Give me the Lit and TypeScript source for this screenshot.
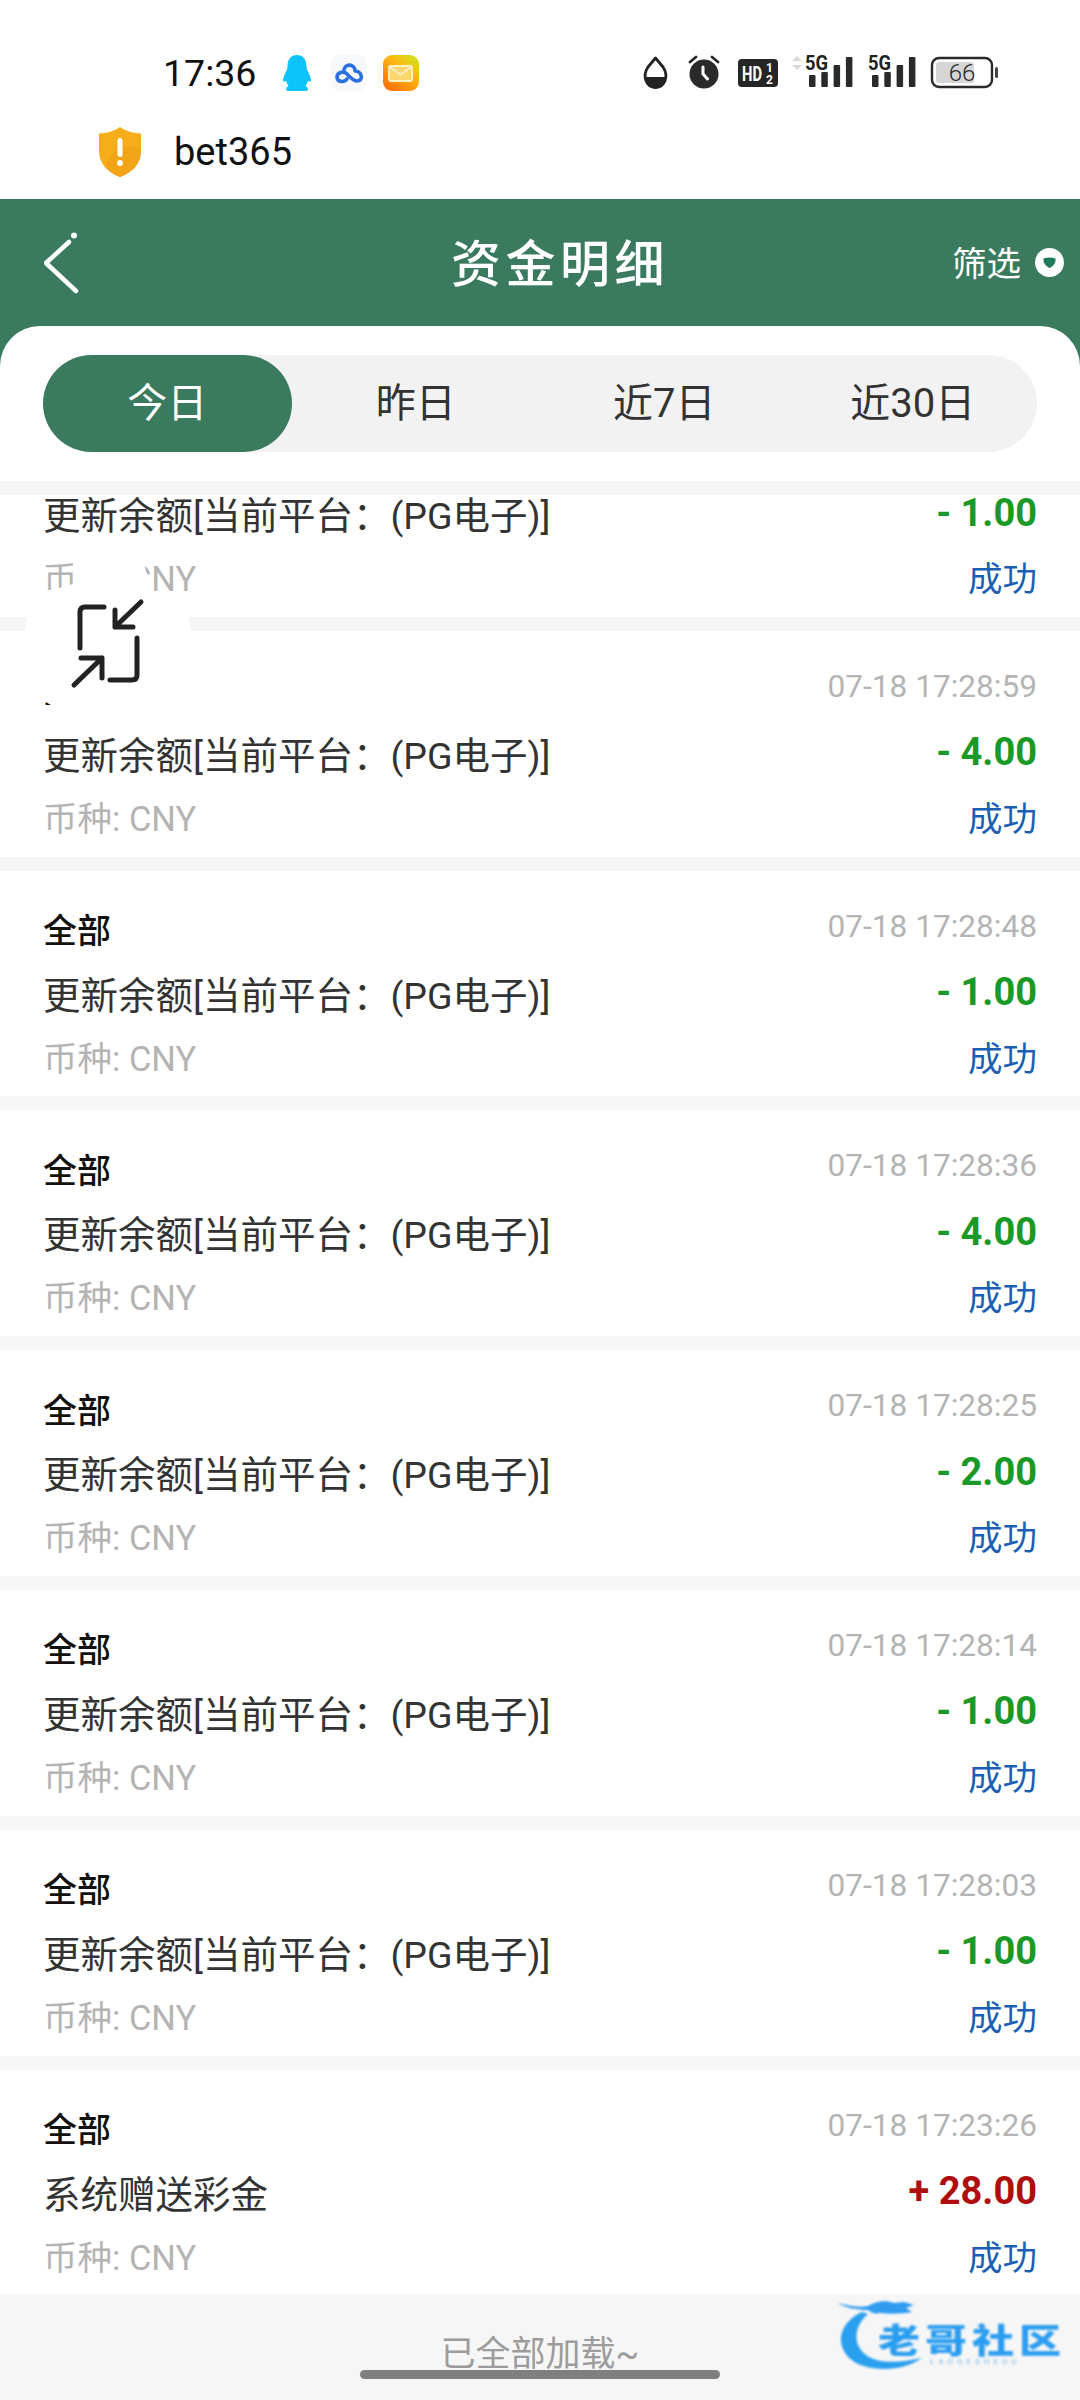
import { LitElement, html, css, svg } from "lit";
import { customElement, state } from "lit/decorators.js";

interface Row {
  time: string;
  text: string;
  amount: string;
  income?: boolean;
}

const PG = "更新余额[当前平台：(PG电子)]";

const ROWS: Row[] = [
  { time: "07-18 17:29:10", text: PG, amount: "- 1.00" },
  { time: "07-18 17:28:59", text: PG, amount: "- 4.00" },
  { time: "07-18 17:28:48", text: PG, amount: "- 1.00" },
  { time: "07-18 17:28:36", text: PG, amount: "- 4.00" },
  { time: "07-18 17:28:25", text: PG, amount: "- 2.00" },
  { time: "07-18 17:28:14", text: PG, amount: "- 1.00" },
  { time: "07-18 17:28:03", text: PG, amount: "- 1.00" },
  { time: "07-18 17:23:26", text: "系统赠送彩金", amount: "+ 28.00", income: true },
];

const TABS = ["今日", "昨日", "近7日", "近30日"];

@customElement("app-root")
export class AppRoot extends LitElement {
  @state() active = 0;

  static styles = css`
    :host {
      display: block;
      position: relative;
      width: 1080px;
      height: 2400px;
      overflow: hidden;
      background: #f6f6f6;
      font-family: Roboto, "Noto Sans CJK SC", sans-serif;
    }

    .status {
      display: flex;
      align-items: center;
      height: 112px;
      padding: 34px 0 0 163px;
      box-sizing: border-box;
      background: #fff;
      color: #111;
      font-size: 37.5px;
    }
    .status .apps {
      display: block;
      margin-left: 26px;
    }
    .status .sys {
      display: block;
      margin: 4px 82px 0 auto;
    }

    .notice {
      display: flex;
      align-items: center;
      gap: 32px;
      height: 87px;
      padding: 0 0 8px 98px;
      box-sizing: border-box;
      background: #fff;
      color: #111;
      font-size: 38px;
    }

    .head {
      display: grid;
      grid-template-columns: 1fr auto 1fr;
      align-items: center;
      height: 127px;
      padding: 0 16px 0 44px;
      box-sizing: border-box;
      background: #3a7a5e;
      color: #fff;
    }
    .head .title {
      font-size: 50px;
      letter-spacing: 4.5px;
      margin: 0 0 6px 12px;
      font-weight: 500;
    }
    .head .filter {
      display: flex;
      align-items: center;
      justify-content: flex-end;
      gap: 14px;
      font-size: 34.5px;
    }
    .head .filter span {
      padding-bottom: 3px;
    }

    .sheet {
      background: #3a7a5e;
    }
    .sheet-inner {
      background: #fff;
      border-radius: 40px 40px 0 0;
      padding: 29px 43px;
    }
    .tabs {
      display: grid;
      grid-template-columns: repeat(4, 1fr);
      height: 97px;
      border-radius: 49px;
      background: #f2f2f2;
    }
    .tab {
      display: flex;
      align-items: center;
      justify-content: center;
      padding-bottom: 7px;
      box-sizing: border-box;
      border-radius: 49px;
      color: #333;
      font-size: 40px;
    }
    .tab.on {
      background: #3a7a5e;
      color: #fff;
    }

    .list {
      overflow: hidden;
      border-top: 14px solid #f6f6f6;
      box-sizing: border-box;
      height: 1813px;
      background: #f6f6f6;
    }
    .rows {
      display: flex;
      flex-direction: column;
      gap: 14px;
      margin-top: -104px;
    }
    .row {
      display: grid;
      grid-template-columns: 1fr auto;
      grid-auto-rows: 44px;
      align-items: center;
      row-gap: 19.5px;
      height: 225.8px;
      padding: 36px 43px 0 43px;
      box-sizing: border-box;
      background: #fff;
    }
    .kind {
      font-size: 34px;
      font-weight: 500;
      color: #111;
    }
    .time {
      font-size: 31.6px;
      color: #b4b4b4;
      text-align: right;
      margin-bottom: 5px;
    }
    .text {
      font-size: 37.5px;
      color: #333;
      white-space: nowrap;
    }
    .amount {
      font-size: 38px;
      font-weight: 700;
      color: #1b9926;
      text-align: right;
    }
    .amount.in {
      color: #b00d0d;
    }
    .coin {
      font-size: 34.5px;
      color: #b4b4b4;
    }
    .state {
      font-size: 34.5px;
      color: #1a5fb4;
      text-align: right;
    }

    .end {
      position: absolute;
      left: 0;
      right: 0;
      top: 2333px;
      text-align: center;
      font-size: 35px;
      line-height: 44px;
      color: #9c9c9c;
    }
    .home {
      position: absolute;
      left: 360px;
      top: 2370px;
      width: 360px;
      height: 9px;
      border-radius: 5px;
      background: #7f7f7f;
    }

    .float {
      position: absolute;
      left: 0;
      top: 550px;
    }

    .logo {
      position: absolute;
      left: 836px;
      top: 2300px;
      width: 230px;
      height: 74px;
      filter: blur(0.8px);
    }
    .logo svg {
      position: absolute;
      left: 0;
      top: 0;
    }
    .logo .cn {
      position: absolute;
      left: 42px;
      top: 19px;
      font-size: 42px;
      line-height: 46px;
      font-weight: 900;
      letter-spacing: 5px;
      white-space: nowrap;
      color: #2b9df0;
      transform: scaleY(0.8);
      transform-origin: 0 50%;
    }
    .logo .en {
      position: absolute;
      left: 94px;
      top: 57px;
      font-size: 8px;
      line-height: 9px;
      letter-spacing: 4px;
      color: #7ab8e6;
      white-space: nowrap;
    }
  `;

  appIcons() {
    return html`<svg class="apps" width="140" height="36" viewBox="0 0 140 36">
      <defs>
        <linearGradient id="mail" x1="0.1" y1="1" x2="0.9" y2="0">
          <stop offset="0" stop-color="#ff6a00" />
          <stop offset="0.6" stop-color="#fdb614" />
          <stop offset="1" stop-color="#cfe51e" />
        </linearGradient>
      </defs>
      <path
        d="M15 0c6 0 9.500 4.500 9.500 11 0 2 .3 3 1.200 5 1.500 3 3.300 7 3.300 9.500 0 1.500-1.200 1.500-3 .2-.5 2-1.300 3.800-2.500 5.300 1.300.8 2.500 1.800 2.500 3.200 0 1.300-1.500 1.800-3.500 1.800H7.500c-2 0-3.500-.5-3.500-1.800 0-1.400 1.200-2.400 2.500-3.200-1.200-1.500-2-3.300-2.500-5.300-1.800 1.300-3 1.300-3-.2C1 23 2.800 19 4.300 16c.9-2 1.200-3 1.200-5C5.500 4.500 9 0 15 0z"
        fill="#0cc4fb"
      />
      <rect x="49" y="0" width="36" height="36" rx="9" fill="#f7f8fa" />
      <g transform="translate(49 0)">
        <path
          d="M13 17C12 8 24 8 24 16M24 16C31 16 33 26 26 26C22 26 19 22 16 19C12 15 6 18 6 22C6 27 13 28 16 24"
          fill="none"
          stroke="#2c6fe0"
          stroke-width="3.600"
          stroke-linecap="round"
        />
      </g>
      <rect x="101" y="0" width="36" height="36" rx="9" fill="url(#mail)" />
      <rect x="107" y="11" width="23" height="15" rx="1.500" fill="#fbd56e" stroke="#fff3c4" stroke-width="1.800" />
      <path d="M107.500 12l11 7.500L129.500 12" fill="none" stroke="#fff3c4" stroke-width="1.800" />
    </svg>`;
  }

  bars(x: number) {
    const heights = [12, 15, 22, 30];
    return heights.map(
      (h, i) =>
        svg`<rect x=${x + i * 12.3} y=${37 - h} width="6.5" height=${h} rx="1" fill="#2a2a2a" />`
    );
  }

  sysIcons() {
    return html`<svg class="sys" width="360" height="50" viewBox="80 0 360 50">
      <g transform="translate(85 0)">
        <path d="M12.500 8L5 17C-1 26 3 37.500 12.500 37.500S26 26 20 17z" fill="#fff" stroke="#222" stroke-width="2.800" stroke-linejoin="round" />
        <path d="M1.500 27H23.500C23 33 19 38.500 12.500 38.500S2 33 1.500 27z" fill="#222" />
      </g>
      <g transform="translate(130 0)">
        <circle cx="16" cy="24" r="14.500" fill="#2a2a2a" />
        <path d="M2 12l6-5M30 12l-6-5" stroke="#2a2a2a" stroke-width="2.800" stroke-linecap="round" />
        <path d="M15 17v7l4.500 5" fill="none" stroke="#fff" stroke-width="3" stroke-linecap="round" />
      </g>
      <rect x="180" y="9" width="40" height="28" rx="4" fill="#262626" />
      <text x="184" y="31" fill="#fff" font-size="21" font-weight="700" textLength="20" lengthAdjust="spacingAndGlyphs" font-family="Roboto">HD</text>
      <text x="208" y="21.500" fill="#fff" font-size="12" font-weight="700" font-family="Roboto">1</text>
      <text x="208" y="34" fill="#fff" font-size="12" font-weight="700" font-family="Roboto">2</text>
      <path d="M239 6l5 5h-10zM239 20l5-5h-10z" fill="#d8d8d8" />
      <text x="247" y="20" font-size="20" font-weight="700" fill="#222" textLength="23" lengthAdjust="spacingAndGlyphs" font-family="Roboto">5G</text>
      ${this.bars(251)}
      <text x="310" y="20" font-size="20" font-weight="700" fill="#222" textLength="23" lengthAdjust="spacingAndGlyphs" font-family="Roboto">5G</text>
      ${this.bars(314)}
      <rect x="374" y="8" width="60" height="29" rx="7" fill="#fff" stroke="#2a2a2a" stroke-width="2.400" />
      <rect x="378" y="12" width="38" height="21" rx="3" fill="#d6d6d6" />
      <rect x="437" y="17" width="3" height="11" rx="1.500" fill="#444" />
      <text x="404" y="31" text-anchor="middle" font-size="24" fill="#2a2a2a" font-family="Roboto" font-weight="300">66</text>
    </svg>`;
  }

  renderRow(r: Row) {
    return html`<div class="row">
      <div class="kind">全部</div>
      <div class="time">${r.time}</div>
      <div class="text">${r.text}</div>
      <div class="amount ${r.income ? "in" : ""}">${r.amount}</div>
      <div class="coin">币种: CNY</div>
      <div class="state">成功</div>
    </div>`;
  }

  render() {
    return html`
      <div class="status">
        <span>17:36</span>
        ${this.appIcons()} ${this.sysIcons()}
      </div>
      <div class="notice">
        <svg width="44" height="50" viewBox="0 0 44 50">
          <path d="M22 0c5 3.500 12 6 21 6.500V24c0 12-8 21-21 26C9 45 1 36 1 24V6.500C10 6 17 3.500 22 0z" fill="#f5ae1a" />
          <path d="M8 41c0-12 10-21 26-22l9 2v3c0 12-8 21-21 26-6-2-10-5-14-9z" fill="#f0a416" />
          <rect x="19.500" y="11" width="5" height="19" rx="2.500" fill="#fff" />
          <circle cx="22" cy="36" r="3" fill="#fff" />
        </svg>
        <span>bet365</span>
      </div>
      <div class="head">
        <svg width="40" height="64" viewBox="0 0 40 64">
          <path d="M25 11L2 32l30 28" fill="none" stroke="#fff" stroke-width="4.500" stroke-linecap="round" stroke-linejoin="round" />
          <circle cx="30" cy="4.500" r="3" fill="#fff" />
        </svg>
        <div class="title">资金明细</div>
        <div class="filter">
          <span>筛选</span>
          <svg width="29" height="29" viewBox="0 0 29 29">
            <circle cx="14.500" cy="14.500" r="14.500" fill="#fff" />
            <path d="M8.500 10.500c4-1.300 8-1.300 12 0 .6 4-2 7.500-6 9.500-4-2-6.600-5.500-6-9.500z" fill="#1f7a5c" />
          </svg>
        </div>
      </div>
      <div class="sheet">
        <div class="sheet-inner">
          <div class="tabs">
            ${TABS.map((t, i) => html`<div class="tab ${i === this.active ? "on" : ""}">${t}</div>`)}
          </div>
        </div>
      </div>
      <div class="list">
        <div class="rows">${ROWS.map((r) => this.renderRow(r))}</div>
      </div>
      <div class="end">已全部加载~</div>
      <div class="home"></div>

      <svg class="float" width="220" height="170" viewBox="0 550 220 170">
        <path
          d="M73 555L141 555 155 600 168 600Q184 606 188 616L191 631Q196 680 166 707L54 707 46 702 30 698Q22 675 25 631L27.500 616Q36 592 73 584Z"
          fill="#fff"
        />
        <g fill="none" stroke="#222" stroke-width="5" stroke-linecap="round" stroke-linejoin="round">
          <path d="M80 648V612Q80 607 85 607H104" />
          <path d="M141 602L115 627M115 610V627H133" />
          <path d="M137 638V675Q137 680 132 680H110" />
          <path d="M74 685L102 658M81 658H102V678" />
        </g>
      </svg>

      <div class="logo">
        <svg width="230" height="74" viewBox="0 0 230 74">
          <path d="M26 12C0 24-2 50 20 63c18 9 48 8 66-5-22 5-44 6-56-3C16 44 18 26 32 14z" fill="#2a9fee" />
          <path d="M2 3c12 3 22 5 30 3 8-5 18-6 26-3l10-1 10 3-8 3 6 4c-10 2-22 2-32 1-6 1-8 0-12-3C22 10 10 8 2 3z" fill="#2f9cf0" />
        </svg>
        <div class="cn">老哥社区</div>
        <div class="en">LAOGESHEOU</div>
      </div>
    `;
  }
}
